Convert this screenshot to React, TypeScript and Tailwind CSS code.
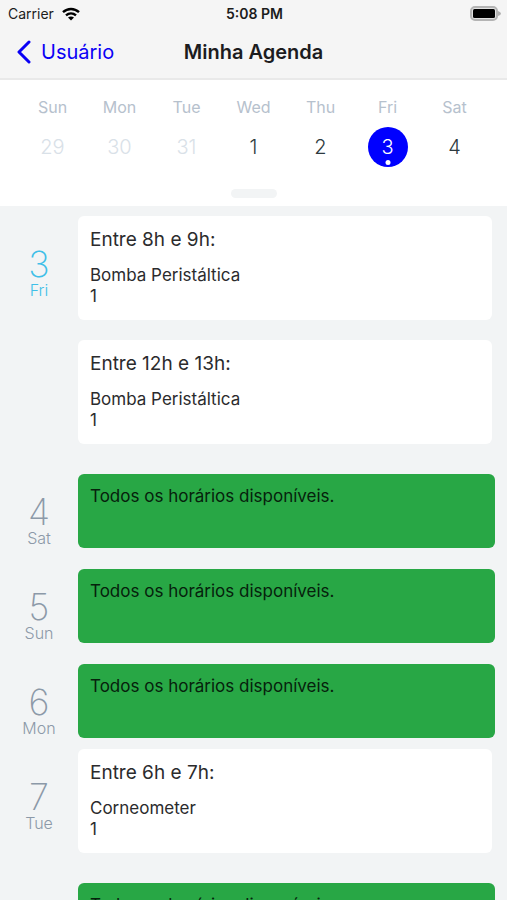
const FONT = 'font-["Inter","Liberation_Sans",sans-serif]';

type WeekDay = { name: string; day: number; state: "past" | "normal" | "selected" };

const week: WeekDay[] = [
  { name: "Sun", day: 29, state: "past" },
  { name: "Mon", day: 30, state: "past" },
  { name: "Tue", day: 31, state: "past" },
  { name: "Wed", day: 1, state: "normal" },
  { name: "Thu", day: 2, state: "normal" },
  { name: "Fri", day: 3, state: "selected" },
  { name: "Sat", day: 4, state: "normal" },
];

type Booking = { title: string; equipment: string; count: number };
type AgendaDay = { day: number; name: string; today?: boolean; bookings: Booking[] };

const agenda: AgendaDay[] = [
  {
    day: 3,
    name: "Fri",
    today: true,
    bookings: [
      { title: "Entre 8h e 9h:", equipment: "Bomba Peristáltica", count: 1 },
      { title: "Entre 12h e 13h:", equipment: "Bomba Peristáltica", count: 1 },
    ],
  },
  { day: 4, name: "Sat", bookings: [] },
  { day: 5, name: "Sun", bookings: [] },
  { day: 6, name: "Mon", bookings: [] },
  { day: 7, name: "Tue", bookings: [{ title: "Entre 6h e 7h:", equipment: "Corneometer", count: 1 }] },
];

function StatusBar() {
  return (
    <div className="grid grid-cols-[1fr_auto_1fr] items-center pt-1 pr-1.5 pl-2 text-sm leading-5 text-[#1c1c1c]">
      <div className="flex items-center gap-2">
        <span>Carrier</span>
        <svg width="18" height="14" viewBox="0 0 18 14" fill="none" stroke="#000" strokeWidth="2.4" aria-hidden="true">
          <path d="M1 5.2C5.6.9 12.4.9 17 5.2" />
          <path d="M4 8.4c2.9-2.6 7.1-2.6 10 0" />
          <path d="M9 13.4 6 10.500c1.700-1.500 4.300-1.500 6 0z" fill="#000" stroke="none" />
        </svg>
      </div>
      <span className="text-center font-semibold">5:08 PM</span>
      <svg className="justify-self-end" width="31" height="16" viewBox="0 0 31 16" aria-hidden="true">
        <rect x="1" y="1" width="26" height="13" rx="4" fill="#e2e2e2" stroke="#b4b4b4" strokeWidth="2" />
        <rect x="3" y="3" width="22" height="9" rx="1.5" fill="#000" />
        <path d="M28 5q3 1 3 2.500t-3 2.500z" fill="#b0b0b0" />
      </svg>
    </div>
  );
}

function NavBar() {
  return (
    <div className="grid grid-cols-[1fr_auto_1fr] items-center px-4 pt-3 pb-2.5">
      <button type="button" className="flex items-center gap-2 justify-self-start text-xl leading-8 text-[#0a00f5]">
        <svg width="17" height="24" viewBox="0 0 17 24" fill="none" stroke="currentColor" strokeWidth="3" strokeLinecap="round" strokeLinejoin="round" aria-hidden="true">
          <path d="M13 2 3 12l10 10" />
        </svg>
        Usuário
      </button>
      <h1 className="text-xl leading-8 font-semibold text-[#1c1c1e]">Minha Agenda</h1>
    </div>
  );
}

function WeekStrip() {
  return (
    <section className="bg-white px-[19px] pt-[15px] pb-2">
      <div className="grid grid-cols-7 text-center">
        {week.map((d) => (
          <div key={d.name} className="flex flex-col items-center gap-2">
            <span className="text-base leading-6 text-[#b6c1cd]">{d.name}</span>
            {d.state === "selected" ? (
              <button type="button" className="relative size-10 rounded-full bg-[#0000ff] text-xl font-light leading-10 text-white">
                {d.day}
                <span className="absolute bottom-0.5 left-1/2 size-[5px] -translate-x-1/2 rounded-full bg-white" />
              </button>
            ) : (
              <button
                type="button"
                className={
                  d.state === "past"
                    ? "size-10 text-xl font-light leading-10 text-[#d9e1e8]"
                    : "size-10 text-xl font-light leading-10 text-[#2d3a40]"
                }
              >
                {d.day}
              </button>
            )}
          </div>
        ))}
      </div>
      <div className="mx-auto mt-[22px] h-[9px] w-[46px] rounded-full bg-[#f2f4f5]" />
    </section>
  );
}

function BookingCard({ booking }: { booking: Booking }) {
  return (
    <article className="my-2.5 mr-[15px] rounded-md bg-white px-3 pt-[11px] pb-[13px] text-[#2b2b2d]">
      <h2 className="mb-3 text-[19px] leading-[26px]">{booking.title}</h2>
      <p className="text-[17px] leading-[21px]">{booking.equipment}</p>
      <p className="text-[17px] leading-[21px]">{booking.count}</p>
    </article>
  );
}

function FreeCard() {
  return (
    <article className="mt-5 mr-3 mb-px h-[74px] rounded-md bg-[#28a745] px-3 pt-3 text-[#06210c]">
      <p className="text-[17px] leading-[21px]">Todos os horários disponíveis.</p>
    </article>
  );
}

function DayRow({ item }: { item: AgendaDay }) {
  return (
    <div className="flex">
      <div
        className={
          item.today
            ? "flex w-[78px] shrink-0 flex-col items-center pt-10 text-[#3fbfe8]"
            : "flex w-[78px] shrink-0 flex-col items-center pt-10 text-[#8c99a8]"
        }
      >
        <span className="text-4xl font-extralight leading-9">{item.day}</span>
        <span className="text-base font-light leading-4">{item.name}</span>
      </div>
      <div className="flow-root min-w-0 flex-1">
        {item.bookings.length === 0 ? (
          <FreeCard />
        ) : (
          <div className="flex flex-col">
            {item.bookings.map((b) => (
              <BookingCard key={b.title} booking={b} />
            ))}
          </div>
        )}
      </div>
    </div>
  );
}

export default function App() {
  return (
    <div className={`flex h-screen flex-col overflow-hidden bg-[#f2f4f5] ${FONT}`}>
      <header className="border-b-2 border-[#e9e9e9] bg-[#f5f5f5]">
        <StatusBar />
        <NavBar />
      </header>
      <WeekStrip />
      <main className="min-h-0 flex-1 overflow-hidden">
        {agenda.map((item) => (
          <DayRow key={item.day} item={item} />
        ))}
        <div className="pl-[78px]">
          <div className="flow-root">
            <FreeCard />
          </div>
        </div>
      </main>
    </div>
  );
}
